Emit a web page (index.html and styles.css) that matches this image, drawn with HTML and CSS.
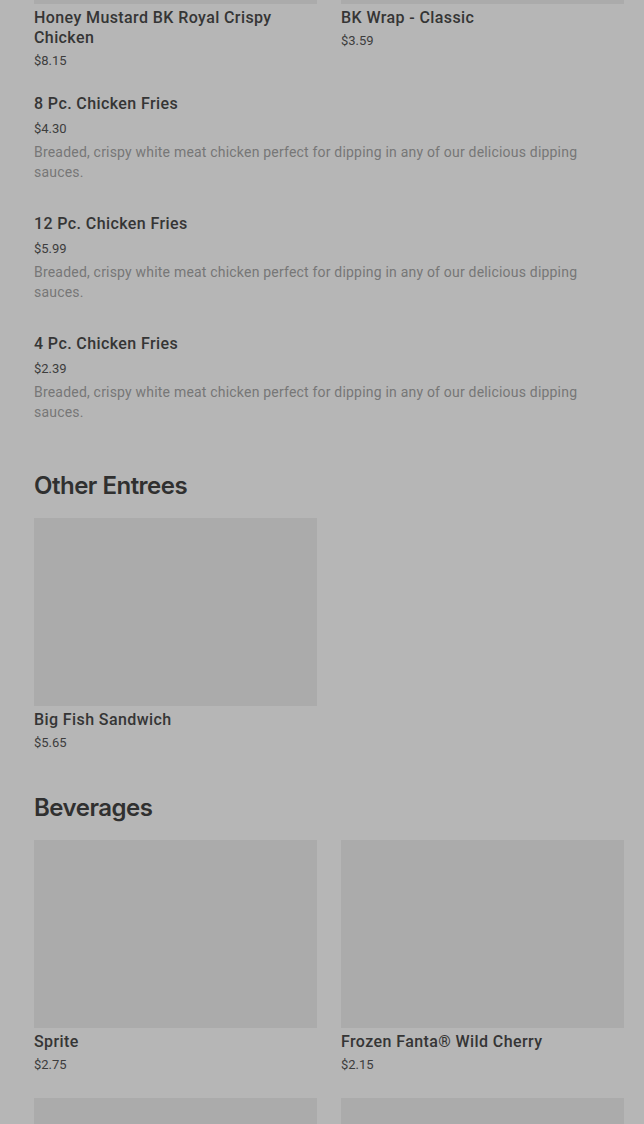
FILE: index.html
```html
<!DOCTYPE html>
<html lang="en">
<head>
  <meta charset="UTF-8">
  <title>Menu</title>
  <link rel="stylesheet" href="styles.css">
</head>
<body>
  <main class="menu">
    <section class="grid grid-top">
      <div class="card">
        <div class="thumb thumb-cut"></div>
        <div class="name">Honey Mustard BK Royal Crispy Chicken</div>
        <div class="price">$8.15</div>
      </div>
      <div class="card">
        <div class="thumb thumb-cut"></div>
        <div class="name">BK Wrap - Classic</div>
        <div class="price">$3.59</div>
      </div>
    </section>

    <section class="list">
      <div class="row">
        <div class="name">8 Pc. Chicken Fries</div>
        <div class="price">$4.30</div>
        <p class="desc">Breaded, crispy white meat chicken perfect for dipping in any of our delicious dipping sauces.</p>
      </div>
      <div class="row">
        <div class="name">12 Pc. Chicken Fries</div>
        <div class="price">$5.99</div>
        <p class="desc">Breaded, crispy white meat chicken perfect for dipping in any of our delicious dipping sauces.</p>
      </div>
      <div class="row">
        <div class="name">4 Pc. Chicken Fries</div>
        <div class="price">$2.39</div>
        <p class="desc">Breaded, crispy white meat chicken perfect for dipping in any of our delicious dipping sauces.</p>
      </div>
    </section>

    <h2 class="section-title">Other Entrees</h2>
    <section class="grid">
      <div class="card">
        <div class="thumb"></div>
        <div class="name">Big Fish Sandwich</div>
        <div class="price">$5.65</div>
      </div>
    </section>

    <h2 class="section-title">Beverages</h2>
    <section class="grid">
      <div class="card">
        <div class="thumb"></div>
        <div class="name">Sprite</div>
        <div class="price">$2.75</div>
      </div>
      <div class="card">
        <div class="thumb"></div>
        <div class="name">Frozen Fanta® Wild Cherry</div>
        <div class="price">$2.15</div>
      </div>
      <div class="card">
        <div class="thumb"></div>
      </div>
      <div class="card">
        <div class="thumb"></div>
      </div>
    </section>
  </main>
</body>
</html>
```

FILE: styles.css
```css
body {
  margin: 0;
  background: #b6b6b6;
  font-family: Roboto, 'Noto Sans', sans-serif;
  color: #333;
  overflow: hidden;
}

.menu {
  padding: 0 20px 0 34px;
}

.grid {
  display: grid;
  grid-template-columns: 1fr 1fr;
  column-gap: 24px;
  row-gap: 23px;
  margin-bottom: 39px;
}

.grid-top {
  margin-bottom: 23px;
}

.thumb {
  height: 188px;
  background: #ababab;
}

.thumb-cut {
  margin-top: -184px;
}

.name {
  margin-top: 4px;
  font-size: 16px;
  line-height: 20px;
  font-weight: 500;
  letter-spacing: 0.4px;
  color: #353535;
}

.price {
  margin-top: 3px;
  font-size: 13px;
  line-height: 20px;
  color: #3d3d3d;
}

.row {
  padding-bottom: 32px;
}

.row .name {
  margin-top: 0;
}

.row .price {
  margin-top: 5px;
}

.desc {
  margin: 3px 0 0;
  font-size: 14px;
  line-height: 20px;
  letter-spacing: 0.2px;
  color: #777;
}

.list {
  margin-bottom: 16px;
}

.section-title {
  margin: 0 0 16px;
  font-family: Inter, 'Noto Sans', sans-serif;
  font-size: 24px;
  line-height: 32px;
  font-weight: 600;
  color: #303030;
  letter-spacing: -0.5px;
}
```
